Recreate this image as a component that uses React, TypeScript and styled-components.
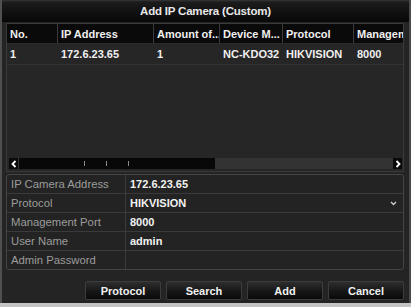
import React from "react";
import styled, { createGlobalStyle } from "styled-components";

const Global = createGlobalStyle`
  html, body { margin: 0; padding: 0; background: #c4c4c4; }
  body { font-family: "Liberation Sans", Arial, sans-serif; }
`;

const Page = styled.div`
  width: 411px;
  height: 307px;
  background: #c4c4c4;
`;

const Window = styled.div`
  box-sizing: border-box;
  width: 411px;
  height: 303px;
  background: #242424;
  border-left: 2px solid #505050;
  border-right: 2px solid #4a4a4a;
  display: flex;
  flex-direction: column;
`;

const TitleBar = styled.div`
  height: 22px;
  flex: none;
  display: flex;
  align-items: center;
  justify-content: center;
  background: linear-gradient(#383838 0px, #1c1c1c 2px, #121212 50%, #080808 100%);
  color: #e8e8e8;
  font-size: 11.5px;
  font-weight: bold;
  letter-spacing: -0.2px;
`;

const Content = styled.div`
  flex: 1;
  display: flex;
  flex-direction: column;
  padding: 1px 5px 0 4px;
`;

const TablePanel = styled.div`
  height: 149px;
  flex: none;
  box-sizing: border-box;
  border: 1px solid #3a3a3a;
  background: #262626;
  display: flex;
  flex-direction: column;
  overflow: hidden;
`;

const Row = styled.div<{ $header?: boolean }>`
  display: flex;
  height: ${(p) => (p.$header ? "19px" : "20px")};
  flex: none;
  background: ${(p) => (p.$header ? "#0a0a0a" : "#262626")};
  border-bottom: 1px solid ${(p) => (p.$header ? "#2c2c2c" : "#333")};
`;

const Cell = styled.div<{ $w: number; $header?: boolean }>`
  box-sizing: border-box;
  width: ${(p) => p.$w}px;
  flex: none;
  padding-left: 3px;
  display: flex;
  align-items: center;
  color: #f0f0f0;
  font-size: 11px;
  font-weight: bold;
  white-space: nowrap;
  overflow: hidden;
  border-right: 1px solid ${(p) => (p.$header ? "#3a3a3a" : "transparent")};
`;

const Spacer = styled.div`
  flex: 1;
`;

const ScrollBar = styled.div`
  height: 11px;
  flex: none;
  margin: 0 1px 2px 2px;
  display: flex;
  align-items: stretch;
  background: #333;
`;

const ArrowBtn = styled.div`
  width: 9px;
  flex: none;
  background: #0a0a0a;
  display: flex;
  align-items: center;
  justify-content: center;
`;

const Thumb = styled.div`
  width: 196px;
  margin-left: 1px;
  background: #080808;
  display: flex;
  align-items: center;
  gap: 21px;
  padding-left: 65px;
  box-sizing: border-box;
`;

const Tick = styled.div`
  width: 1px;
  height: 5px;
  background: #8a8a8a;
`;

const Track = styled.div`
  flex: 1;
`;

const Form = styled.div`
  margin-top: 2px;
  flex: none;
  border: 1px solid #444;
  border-radius: 3px;
  background: #232323;
  display: flex;
  flex-direction: column;
  overflow: hidden;
`;

const FormRow = styled.div`
  display: grid;
  grid-template-columns: 119px 1fr;
  height: 18px;
  border-bottom: 1px solid #3a3a3a;
  &:last-child { border-bottom: none; }
`;

const Label = styled.div`
  display: flex;
  align-items: center;
  padding-left: 4px;
  color: #9c9c9c;
  font-size: 11.3px;
  border-right: 1px solid #3a3a3a;
  white-space: nowrap;
`;

const Value = styled.div`
  display: flex;
  align-items: center;
  justify-content: space-between;
  padding: 0 6px 0 4px;
  color: #f2f2f2;
  font-size: 11px;
  font-weight: bold;
`;

const ButtonRow = styled.div`
  display: flex;
  justify-content: flex-end;
  gap: 5px;
  margin-top: 11px;
`;

const Button = styled.div`
  box-sizing: border-box;
  width: 76px;
  height: 19px;
  display: flex;
  align-items: center;
  justify-content: center;
  border: 1px solid #3c3c3c;
  border-radius: 2px;
  background: linear-gradient(#2e2e2e, #161616 55%, #0a0a0a);
  color: #f0f0f0;
  font-size: 11px;
  font-weight: bold;
`;

const Chevron = ({ dir }: { dir: "l" | "r" }) => (
  <svg width="6" height="8" viewBox="0 0 6 8">
    <path
      d={dir === "l" ? "M4.5 1 L1.5 4 L4.5 7" : "M1.5 1 L4.5 4 L1.5 7"}
      stroke="#fff"
      strokeWidth="1.8"
      fill="none"
    />
  </svg>
);

const Down = () => (
  <svg width="7" height="5" viewBox="0 0 7 5">
    <path d="M1 1 L3.5 3.5 L6 1" stroke="#cfcfcf" strokeWidth="1.3" fill="none" />
  </svg>
);

const cols = [51, 96, 66, 63, 71, 60];
const headers = ["No.", "IP Address", "Amount of...", "Device M...", "Protocol", "Management Port"];
const data = ["1", "172.6.23.65", "1", "NC-KDO32", "HIKVISION", "8000"];

const fields: [string, string, boolean?][] = [
  ["IP Camera Address", "172.6.23.65"],
  ["Protocol", "HIKVISION", true],
  ["Management Port", "8000"],
  ["User Name", "admin"],
  ["Admin Password", ""],
];

export default function App() {
  return (
    <Page>
      <Global />
      <Window>
        <TitleBar>Add IP Camera (Custom)</TitleBar>
        <Content>
          <TablePanel>
            <Row $header>
              {headers.map((h, i) => (
                <Cell key={h} $w={cols[i]} $header>
                  {h}
                </Cell>
              ))}
            </Row>
            <Row>
              {data.map((d, i) => (
                <Cell key={i} $w={cols[i]}>
                  {d}
                </Cell>
              ))}
            </Row>
            <Spacer />
            <ScrollBar>
              <ArrowBtn>
                <Chevron dir="l" />
              </ArrowBtn>
              <Thumb>
                <Tick />
                <Tick />
                <Tick />
              </Thumb>
              <Track />
              <ArrowBtn>
                <Chevron dir="r" />
              </ArrowBtn>
            </ScrollBar>
          </TablePanel>
          <Form>
            {fields.map(([l, v, dd]) => (
              <FormRow key={l}>
                <Label>{l}</Label>
                <Value>
                  <span>{v}</span>
                  {dd && <Down />}
                </Value>
              </FormRow>
            ))}
          </Form>
          <ButtonRow>
            <Button>Protocol</Button>
            <Button>Search</Button>
            <Button>Add</Button>
            <Button>Cancel</Button>
          </ButtonRow>
        </Content>
      </Window>
    </Page>
  );
}
